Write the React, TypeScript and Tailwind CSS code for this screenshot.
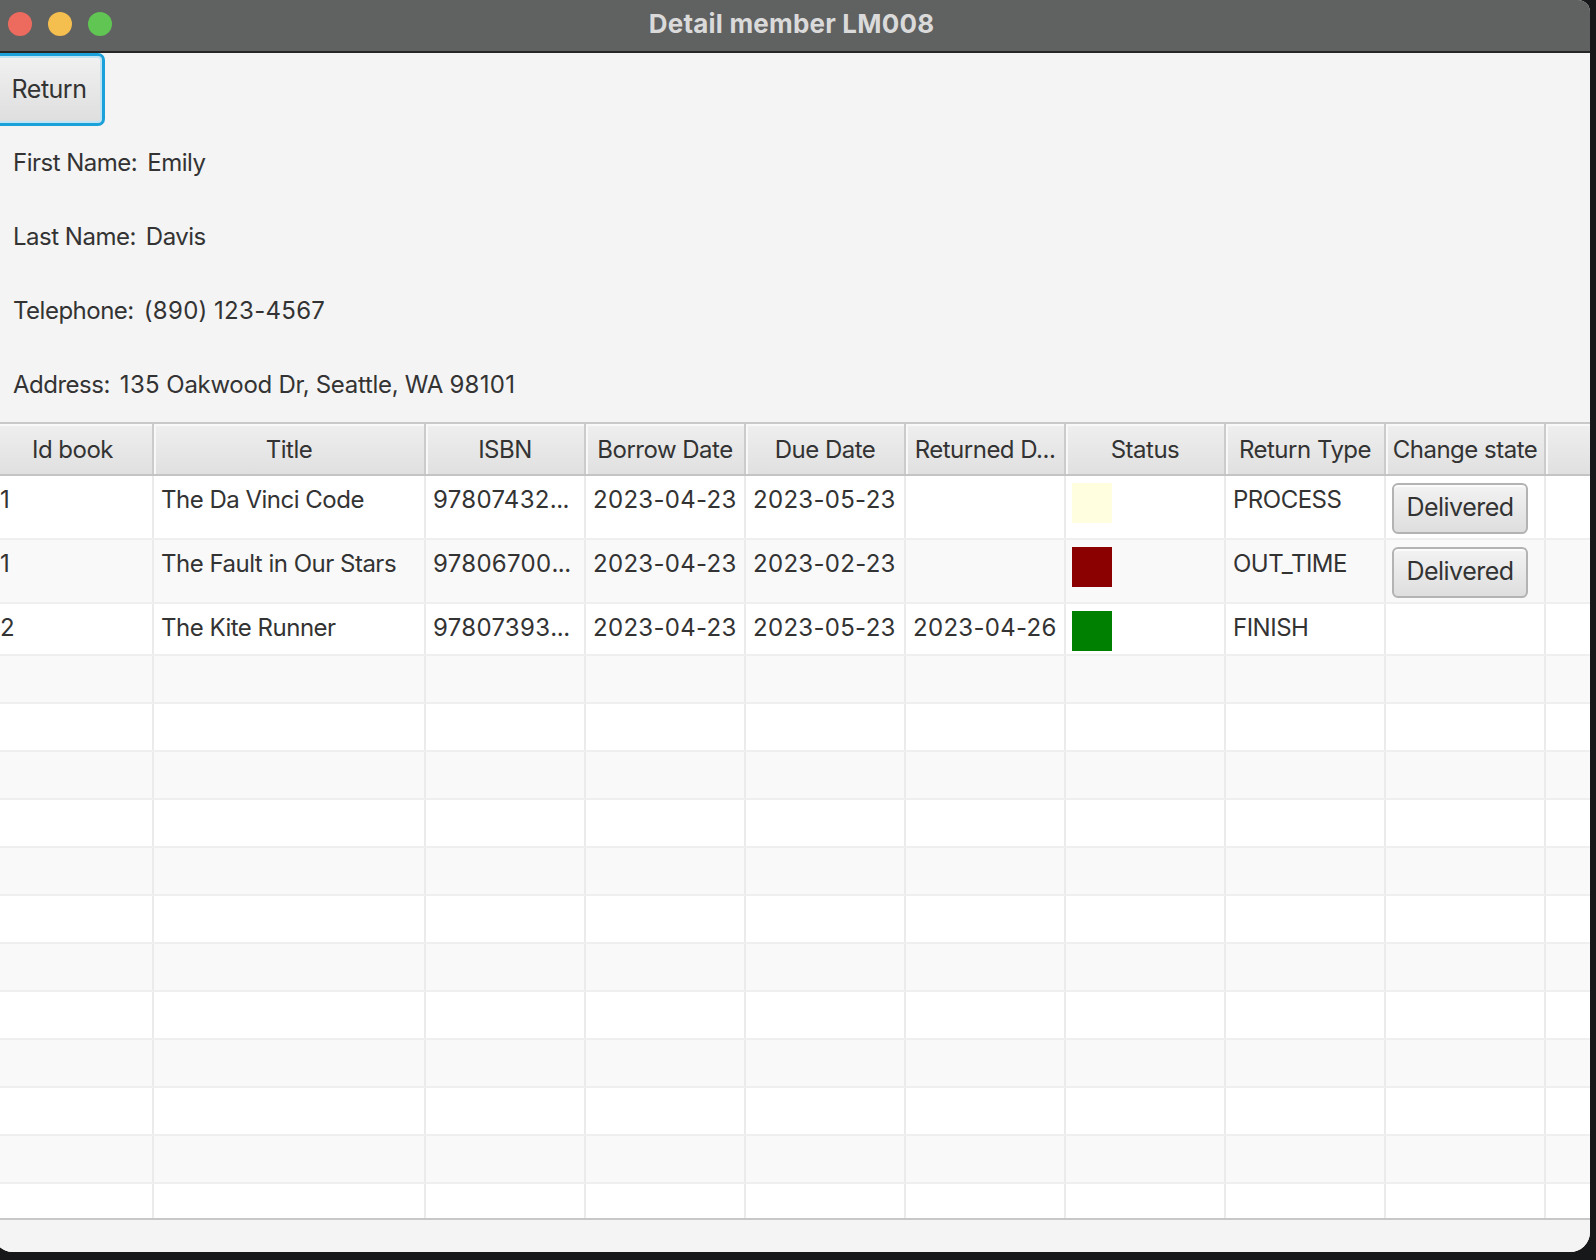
import React from 'react';

type Loan = {
  id: string;
  title: string;
  isbn: string;
  borrow: string;
  due: string;
  returned: string;
  status: string;
  type: string;
  action: boolean;
  height: string;
};

const loans: Loan[] = [
  {
    id: '1',
    title: 'The Da Vinci Code',
    isbn: '97807432...',
    borrow: '2023-04-23',
    due: '2023-05-23',
    returned: '',
    status: 'bg-[#ffffe0]',
    type: 'PROCESS',
    action: true,
    height: 'h-[64px]',
  },
  {
    id: '1',
    title: 'The Fault in Our Stars',
    isbn: '97806700...',
    borrow: '2023-04-23',
    due: '2023-02-23',
    returned: '',
    status: 'bg-[#8b0000]',
    type: 'OUT_TIME',
    action: true,
    height: 'h-[64px]',
  },
  {
    id: '2',
    title: 'The Kite Runner',
    isbn: '97807393...',
    borrow: '2023-04-23',
    due: '2023-05-23',
    returned: '2023-04-26',
    status: 'bg-[#008000]',
    type: 'FINISH',
    action: false,
    height: 'h-[52px]',
  },
];

const headers = ['Id book', 'Title', 'ISBN', 'Borrow Date', 'Due Date', 'Returned D...', 'Status', 'Return Type', 'Change state', ''];

const fields = [
  ['First Name:', 'Emily', ''],
  ['Last Name:', 'Davis', ''],
  ['Telephone:', '(890) 123-4567', 'tracking-[-0.4px]'],
  ['Address:', '135 Oakwood Dr, Seattle, WA 98101', 'tracking-[-0.3px]'],
];

const gridCols = 'grid grid-cols-[161px_272px_160px_160px_160px_160px_160px_160px_160px_1fr]';

const Txt = ({ text }: { text: string }) => (
  <>
    {text.split(/([0-9()\-]+)/).map((part, i) =>
      /^[0-9()\-]+$/.test(part) ? (
        <span key={i} className="tracking-[0.3px]">
          {part}
        </span>
      ) : (
        <React.Fragment key={i}>{part}</React.Fragment>
      )
    )}
  </>
);

const Cell = ({ text = '' }: { text?: string }) => (
  <div className="h-full overflow-hidden whitespace-nowrap border-r-2 border-[#ebebeb] px-[7px] pt-[9px] leading-[30px]">
    <Txt text={text} />
  </div>
);

const LoanRow = ({ loan, index }: { loan: Loan; index: number }) => (
  <div
    className={`${gridCols} ${loan.height} border-b-2 border-[#efefef] ${index % 2 === 1 ? 'bg-[#f9f9f9]' : 'bg-white'}`}
  >
    <Cell text={loan.id} />
    <Cell text={loan.title} />
    <Cell text={loan.isbn} />
    <Cell text={loan.borrow} />
    <Cell text={loan.due} />
    <Cell text={loan.returned} />
    <div className="h-full border-r-2 border-[#ebebeb] px-[6px] pt-[7px]">
      <div className={`h-[40px] w-[40px] ${loan.status}`} />
    </div>
    <Cell text={loan.type} />
    <div className="h-full border-r-2 border-[#ebebeb] px-[6px] pt-[7px]">
      {loan.action && (
        <button className="flex h-[51px] w-[136px] items-center justify-center rounded-[6px] border-2 border-[#b3b3b3] bg-gradient-to-b from-[#f3f3f3] to-[#dedede] pb-[1px] text-[25px] text-[#333] shadow-[inset_0_2px_0_#fbfbfb]">
          Delivered
        </button>
      )}
    </div>
    <div className="h-full" />
  </div>
);

const EmptyRow = ({ index }: { index: number }) => (
  <div className={`${gridCols} h-[48px] border-b-2 border-[#efefef] ${index % 2 === 1 ? 'bg-[#f9f9f9]' : 'bg-white'}`}>
    {headers.map((h, i) =>
      i < 9 ? <div key={i} className="h-full border-r-2 border-[#ebebeb]" /> : <div key={i} className="h-full" />
    )}
  </div>
);

export default function App() {
  return (
    <div className="h-[1260px] w-[1596px] overflow-hidden bg-[#17181a] font-['Inter','Noto_Sans',sans-serif] text-[24px] tracking-[-0.5px] text-[#333]">
      <div className="-ml-[7px] flex h-[1252px] w-[1597px] flex-col overflow-hidden rounded-tr-[12px] rounded-br-[20px] rounded-bl-[20px] bg-[#f4f4f4]">
        <div className="relative flex h-[53px] shrink-0 items-center justify-center border-b-2 border-[#262626] bg-[#606161] pb-[5px]">
          <div className="absolute left-[15px] top-[12px] flex gap-[16px]">
            <span className="h-[24px] w-[24px] rounded-full bg-[#ed6a5e]" />
            <span className="h-[24px] w-[24px] rounded-full bg-[#f5bf4f]" />
            <span className="h-[24px] w-[24px] rounded-full bg-[#61c554]" />
          </div>
          <span className="text-[26px] font-bold tracking-[0.2px] text-[#dadada]">Detail member LM008</span>
        </div>

        <div className="flex h-[73px] shrink-0">
          <button className="flex h-[73px] w-[112px] items-center justify-center rounded-[7px] border-[3px] border-[#1ba1da] bg-gradient-to-b from-[#f1f1f1] to-[#dedede] text-[25px] text-[#333] shadow-[inset_0_0_0_2px_#bfe3f2]">
            Return
          </button>
        </div>

        <div className="flex shrink-0 flex-col pl-[20px]">
          {fields.map(([label, value, track]) => (
            <div key={label} className="flex h-[74px] items-center gap-[10px]">
              <span>{label}</span>
              <span className={track}>
                <Txt text={value} />
              </span>
            </div>
          ))}
        </div>

        <div className={`${gridCols} h-[54px] shrink-0 border-y-2 border-t-[#c9c9c9] border-b-[#c4c4c4]`}>
          {headers.map((h, i) => (
            <div
              key={i}
              className={`flex h-full items-center justify-center overflow-hidden whitespace-nowrap bg-gradient-to-b from-[#efefef] to-[#e0e0e0] px-[6px] pt-[2px] shadow-[inset_2px_2px_0_#f8f8f8] ${i < 9 ? 'border-r-2 border-[#cbcbcb]' : ''}`}
            >
              {h}
            </div>
          ))}
        </div>

        <div className="h-[742px] shrink-0 overflow-hidden">
          {loans.map((loan, i) => (
            <LoanRow key={i} loan={loan} index={i} />
          ))}
          {Array.from({ length: 13 }).map((_, i) => (
            <EmptyRow key={i} index={i + 3} />
          ))}
        </div>

        <div className="flex-1 border-t-2 border-[#c8c8c8] bg-[#f4f4f4]" />
      </div>
    </div>
  );
}
